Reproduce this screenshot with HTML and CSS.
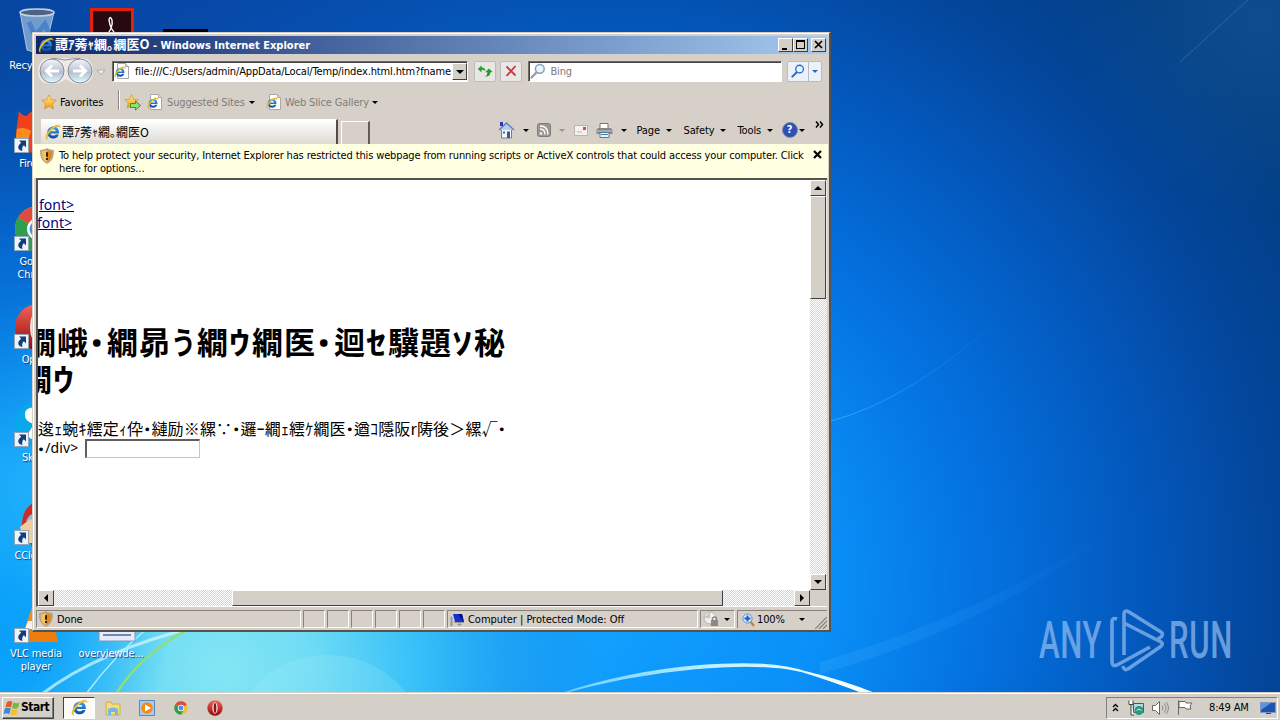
FILE: index.html
```
<!DOCTYPE html>
<html lang="en">

<head>
    <meta charset="UTF-8">
    <meta name="viewport" content="width=device-width, initial-scale=1.0">
    <title>Desktop</title>
    <link rel="stylesheet" href="styles.css">
</head>

<body>

    <!-- shared icons -->
    <svg class="defs" width="0" height="0">
        <defs>
            <linearGradient id="gBlue" x1="0" y1="0" x2="0" y2="1">
                <stop offset="0" stop-color="#3aa4ee" />
                <stop offset="1" stop-color="#0b4aa0" />
            </linearGradient>
            <linearGradient id="gRound" x1="0" y1="0" x2="0" y2="1">
                <stop offset="0" stop-color="#f4f6fa" />
                <stop offset=".45" stop-color="#c3cad6" />
                <stop offset=".55" stop-color="#b4c0cf" />
                <stop offset="1" stop-color="#e0faff" />
            </linearGradient>
            <linearGradient id="gStar" x1="0" y1="0" x2="0" y2="1">
                <stop offset="0" stop-color="#fff08a" />
                <stop offset="1" stop-color="#f49a10" />
            </linearGradient>
            <linearGradient id="gRed" x1="0" y1="0" x2="0" y2="1">
                <stop offset="0" stop-color="#f0645a" />
                <stop offset="1" stop-color="#960a0a" />
            </linearGradient>
        </defs>
        <symbol id="ie" viewBox="0 0 16 16">
            <path d="M14 9.400H5.400c.2 1.500 1.300 2.200 2.900 2.200 1.200 0 2-.4 2.400-1.200h3c-.7 2.500-2.600 4-5.400 4-3.600 0-6-2.500-6-6S4.700 2.500 8.300 2.500s6 2.600 5.700 6.900zM10.800 7.200C10.600 6 9.600 5.300 8.200 5.300S5.700 6 5.400 7.200z" fill="url(#gBlue)" />
            <path d="M2.600 15.300C-.8 14.800 1.200 8.400 6.400 4 10.800.4 15.400 0 15 3.500 14 1.700 10.700 2.700 7.300 5.600 3.200 9.200 1.300 13.600 2.600 15.300z" fill="#f5c62c" stroke="#c98e0c" stroke-width=".3" />
        </symbol>
        <symbol id="iepage" viewBox="0 0 16 16">
            <path d="M3.500 .5h8l3 3v12h-11z" fill="#fff" stroke="#a8a8a8" />
            <path d="M11.500 .5v3h3" fill="#ddd" stroke="#aaa" />
            <use href="#ie" x="0" y="3" width="12" height="12" />
        </symbol>
        <symbol id="star" viewBox="0 0 16 16">
            <path d="M8 .8l2.200 4.800 5 .6-3.700 3.500 1 5.200L8 12.300l-4.500 2.600 1-5.200L.8 6.200l5-.6z" fill="url(#gStar)" stroke="#d08c28" stroke-width=".7" />
        </symbol>
        <symbol id="shield" viewBox="0 0 16 16">
            <path d="M8 .6C6 1.800 4 2.200 1.600 2.300c-.3 6.200 1.200 10.700 6.400 13.100 5.200-2.400 6.700-6.900 6.400-13.100C12 2.200 10 1.800 8 .6z" fill="#c9a878" stroke="#9d9d9d" stroke-width=".8" />
            <path d="M8 2C6.300 3 4.600 3.300 2.900 3.400 2.800 8.600 4 12 8 14.100z" fill="#f8c458" />
            <path d="M8 2c1.700 1 3.400 1.300 5.100 1.400.1 5.200-1.100 8.600-5.100 10.700z" fill="#d88a28" />
            <path d="M8 4.300v4.400M8 10v2" stroke="#3a2408" stroke-width="2" />
        </symbol>
        <symbol id="glass" viewBox="0 0 16 16">
            <path d="M6.600 9.400L1.500 14.500" stroke="currentColor" stroke-width="2.200" stroke-linecap="round" />
            <circle cx="9.800" cy="5.800" r="4.400" fill="#e8f6ff" stroke="currentColor" stroke-width="1.500" />
        </symbol>
        <symbol id="shortcut" viewBox="0 0 15 15">
            <path d="M.5 .5h14v14H.5z" fill="#eef4fa" stroke="#8fa6bb" />
            <path d="M5 2.500h7v7L9.900 7.300C8.400 8.600 7.800 10.400 8.400 13 3.400 12 2.800 7.600 7.200 4.700z" fill="#123e80" />
        </symbol>
        <symbol id="chrome" viewBox="0 0 48 48">
            <circle cx="24" cy="24" r="23" fill="#eac234" />
            <path d="M24 24L4 12.600A23 23 0 0 1 44 13z" fill="#dd4b3e" />
            <path d="M24 24L4 12.600A23 23 0 0 0 24 47l10-17z" fill="#2f9e50" />
            <circle cx="24" cy="24" r="11" fill="#fff" />
            <circle cx="24" cy="24" r="8.500" fill="#4c8bf0" />
        </symbol>
        <symbol id="opera" viewBox="0 0 48 48">
            <circle cx="24" cy="24" r="23" fill="url(#gRed)" />
            <ellipse cx="24" cy="24" rx="8" ry="17" fill="#f6e4e0" />
            <ellipse cx="24" cy="24" rx="4" ry="15" fill="#8c1412" />
        </symbol>
    </svg>

    <div class="desktop">

        <!-- wallpaper -->
        <svg class="wallpaper" viewBox="0 0 1280 720">
            <defs>
                <radialGradient id="sky" gradientUnits="userSpaceOnUse" cx="600" cy="580" r="800">
                    <stop offset="0" stop-color="#12a2ff" />
                    <stop offset=".28" stop-color="#0a90f8" />
                    <stop offset=".48" stop-color="#0472e0" />
                    <stop offset=".68" stop-color="#0358bc" />
                    <stop offset=".85" stop-color="#034599" />
                    <stop offset="1" stop-color="#023f84" />
                </radialGradient>
                <radialGradient id="leftglow" gradientUnits="userSpaceOnUse" cx="0" cy="640" r="600">
                    <stop offset="0" stop-color="#0aa4fc" />
                    <stop offset=".3" stop-color="#0a9cf6" />
                    <stop offset=".65" stop-color="#0674e0" stop-opacity=".75" />
                    <stop offset="1" stop-color="#0658c0" stop-opacity="0" />
                </radialGradient>
                <radialGradient id="topleft" gradientUnits="userSpaceOnUse" cx="100" cy="-60" r="500">
                    <stop offset="0" stop-color="#0a48b0" stop-opacity=".8" />
                    <stop offset="1" stop-color="#0a58c0" stop-opacity="0" />
                </radialGradient>
                <radialGradient id="cyan" gradientUnits="userSpaceOnUse" cx="225" cy="670" r="430">
                    <stop offset="0" stop-color="#84e6f4" />
                    <stop offset=".2" stop-color="#70dcf4" />
                    <stop offset=".45" stop-color="#3cc8fa" stop-opacity=".9" />
                    <stop offset="1" stop-color="#12a2ff" stop-opacity="0" />
                </radialGradient>
                <radialGradient id="left" gradientUnits="userSpaceOnUse" cx="0" cy="640" r="170">
                    <stop offset="0" stop-color="#0aa0fa" />
                    <stop offset=".3" stop-color="#0aa0fa" stop-opacity=".9" />
                    <stop offset="1" stop-color="#0aa0fa" stop-opacity="0" />
                </radialGradient>
                <linearGradient id="arc" gradientUnits="userSpaceOnUse" x1="560" y1="0" x2="880" y2="0">
                    <stop offset="0" stop-color="#9ae6ff" stop-opacity=".5" />
                    <stop offset=".5" stop-color="#c6f2ff" />
                    <stop offset="1" stop-color="#fff" />
                </linearGradient>
                <linearGradient id="thin" gradientUnits="userSpaceOnUse" x1="831" y1="0" x2="1000" y2="0">
                    <stop offset="0" stop-color="#50bcff" stop-opacity=".6" />
                    <stop offset="1" stop-color="#50bcff" stop-opacity="0" />
                </linearGradient>
                <linearGradient id="ray" gradientUnits="userSpaceOnUse" x1="820" y1="0" x2="1110" y2="0">
                    <stop offset="0" stop-color="#4cb4ff" stop-opacity=".2" />
                    <stop offset="1" stop-color="#4cb4ff" stop-opacity="0" />
                </linearGradient>
                <radialGradient id="corner" gradientUnits="userSpaceOnUse" cx="1260" cy="20" r="190">
                    <stop offset="0" stop-color="#3c80b0" stop-opacity=".2" />
                    <stop offset="1" stop-color="#3c80b0" stop-opacity="0" />
                </radialGradient>
            </defs>
            <rect width="1280" height="720" fill="url(#sky)" />
            <rect width="1280" height="720" fill="url(#topleft)" />
            <rect width="1280" height="720" fill="url(#leftglow)" />
            <rect width="1280" height="720" fill="url(#cyan)" />
            <rect width="1280" height="720" fill="url(#left)" />
            <rect width="1280" height="720" fill="url(#corner)" />
            <path d="M831 421Q910 400 1000 318" fill="none" stroke="url(#thin)" />
            <path d="M1180 62L1248 0" stroke="#6cb0e8" stroke-opacity=".3" />
            <path d="M820 662Q980 615 1110 530V534Q980 630 820 674z" fill="url(#ray)" />
            <path d="M235 720Q262 655 330 655Q380 656 412 700z" fill="#a8f0fa" fill-opacity=".2" />
            <path d="M42 694Q100 650 200 626" fill="none" stroke="#d4fbff" stroke-width="3" stroke-opacity=".7" />
            <path d="M86 694Q115 655 150 626" fill="none" stroke="#a8eefc" stroke-width="1.500" />
            <path d="M116 694Q140 655 190 628" fill="none" stroke="#90e070" stroke-width="2.500" />
            <path d="M560 694C650 664 760 656 806 672Q840 680 876 694H866Q830 680 800 671C750 660 650 668 560 694z" fill="url(#arc)" stroke="url(#arc)" stroke-width="1.300" />
        </svg>

        <!-- desktop icons, mostly covered by the window -->
        <div class="icon recycle">
            <svg width="40" height="46" viewBox="0 0 40 46">
                <path d="M3 4l7 38q10 4 18 0L37 4z" fill="#8fb2da" fill-opacity=".8" stroke="#a9c4e2" />
                <path d="M12 14l6 14 10-12 4 10" fill="none" stroke="#3c78c4" stroke-width="5" stroke-opacity=".7" />
                <ellipse cx="20" cy="4.500" rx="17" ry="3.500" fill="#4c6484" stroke="#c4d4e4" stroke-width="1.500" />
            </svg>
            <span>Recycle Bin</span>
        </div>
        <div class="icon acrobat">
            <svg width="44" height="40" viewBox="0 0 44 40">
                <path d="M1.500 1.500h41v38h-41z" fill="#270a10" stroke="#e4200e" stroke-width="3" />
                <path d="M13 32Q24 20 22 12q-2-5-3 0 1 10 9 16" fill="none" stroke="#fff" stroke-width="1.400" />
            </svg>
        </div>
        <div class="icon console"></div>
        <div class="icon firefox">
            <svg width="48" height="42" viewBox="0 0 48 42">
                <path d="M5 0q3 5 8 5 3-5 8-5v6q24 4 24 22c0 12-10 14-22 14S1 38 2 22Q3 14 5 0z" fill="#f0401c" />
                <path d="M3 18q8-3 14 2l-3 9-12-1z" fill="#fc8c1c" />
                <use href="#shortcut" x="0" y="27" width="15" height="15" />
            </svg>
            <span>Firefox</span>
        </div>
        <div class="icon gchrome">
            <svg width="48" height="48" viewBox="0 0 48 48">
                <use href="#chrome" width="48" height="48" />
                <use href="#shortcut" x="0" y="31" width="15" height="15" />
            </svg>
            <span>Google<br>Chrome</span>
        </div>
        <div class="icon gopera">
            <svg width="48" height="48" viewBox="0 0 48 48">
                <use href="#opera" width="48" height="48" />
                <use href="#shortcut" x="0" y="31" width="15" height="15" />
            </svg>
            <span>Opera</span>
        </div>
        <div class="icon skype">
            <svg width="48" height="48" viewBox="0 0 48 48">
                <circle cx="24" cy="24" r="23" fill="#08a8ec" />
                <path d="M30 8q-20-5-19 6 0 8 14 10v14q-8 2-12-4" fill="#fff" />
                <use href="#shortcut" x="0" y="31" width="15" height="15" />
            </svg>
            <span>Skype</span>
        </div>
        <div class="icon ccleaner">
            <svg width="48" height="48" viewBox="0 0 48 48">
                <path d="M8 26Q8 4 30 0v48H18z" fill="#cc2c24" />
                <path d="M12 22q6-12 14-4v10z" fill="#7cc0ec" />
                <path d="M6 28l10-8 12 6v18H10z" fill="#f2cc9c" />
                <use href="#shortcut" x="0" y="31" width="15" height="15" />
            </svg>
            <span>CCleaner</span>
        </div>
        <div class="icon vlc">
            <svg width="48" height="48" viewBox="0 0 48 48">
                <path d="M20 4h8l10 30H10z" fill="#f08a18" />
                <path d="M14 24h20l3 8H11z" fill="#f4f4f4" />
                <path d="M7 32h34l3 13H3z" fill="#ee7d10" />
                <use href="#shortcut" x="0" y="31" width="15" height="15" />
            </svg>
            <span>VLC media<br>player</span>
        </div>
        <div class="icon overview">
            <svg width="38" height="48" viewBox="0 0 38 48">
                <path d="M1 0h36v44H1z" fill="#e6ecfa" stroke="#8096c0" />
                <path d="M5 38h28" stroke="#4868a8" stroke-width="1.500" />
            </svg>
            <span>overviewde...</span>
        </div>

        <!-- browser window -->
        <div class="window">
            <div class="titlebar">
                <svg width="16" height="16"><use href="#ie" /></svg>
                <b class="title"><span class="jp">譚ｱ莠ｬ繝｡繝医Ο</span> - Windows Internet Explorer</b>
                <div class="capbtn"><svg width="15" height="14"><path d="M4 10h5v2H4z" /></svg></div>
                <div class="capbtn"><svg width="15" height="14"><path d="M3 2h9v9H3zM4 4v6h7V4z" fill-rule="evenodd" /></svg></div>
                <div class="capbtn close"><svg width="15" height="14"><path d="M4 3l7 7M11 3l-7 7" stroke="#000" stroke-width="1.700" /></svg></div>
            </div>

            <!-- address row -->
            <div class="navbar">
                <svg class="backfwd" width="56" height="28" viewBox="0 0 56 28">
                    <path d="M13 1h29q13 0 13 13T42 27q-8 0-14-5-6 5-15 5Q0 27 0 14T13 1z" fill="#ece9e6" />
                    <path d="M13 1.500q8 0 14 1.500 8-1.500 15-1.500" fill="none" stroke="#8a8e96" />
                    <circle cx="14" cy="14" r="12" fill="url(#gRound)" stroke="#858c98" />
                    <circle cx="42" cy="14" r="12" fill="url(#gRound)" stroke="#858c98" />
                    <path d="M21 14H9M14 8.500L8.500 14l5.500 5.500M35 14h12M42 8.500l5.500 5.500-5.500 5.500" fill="none" stroke="#fff" stroke-width="3" />
                </svg>
                <svg class="histdrop" width="10" height="7"><path d="M1 1h8L5 6z" fill="#eee" stroke="#b0aca4" /></svg>
                <div class="address">
                    <svg width="16" height="16"><use href="#iepage" /></svg>
                    <span class="url">file:///C:/Users/admin/AppData/Local/Temp/index.html.htm?fname</span>
                    <div class="combo"><i class="down"></i></div>
                </div>
                <div class="tool refresh">
                    <svg width="16" height="16" viewBox="0 0 16 16">
                        <path d="M.8 6L4.500 2.300V4.500Q8 4 8.500 8 7 6.500 4.500 7v2.600z" fill="#2ba02b" />
                        <path d="M15.500 9L12 5.500 8.300 9.200h2.200q0 3-2.500 4.300 5 .5 5.500-4.300z" fill="#1f9a24" />
                    </svg>
                </div>
                <div class="tool stop">
                    <svg width="14" height="14"><path d="M2.500 2.500l9 9M11.500 2l-9 10" stroke="#cc3440" stroke-width="1.800" /></svg>
                </div>
                <div class="search">
                    <svg width="16" height="16" color="#8aa0b4"><use href="#glass" /></svg>
                    <span>Bing</span>
                </div>
                <div class="tool go">
                    <svg width="14" height="14" color="#2468d8"><use href="#glass" /></svg>
                    <i class="down blue"></i>
                </div>
            </div>

            <!-- favorites row -->
            <div class="favbar">
                <svg width="16" height="16"><use href="#star" /></svg>
                <span class="fav">Favorites</span>
                <span class="vsep"></span>
                <svg width="18" height="17" viewBox="0 0 18 17">
                    <use href="#star" width="15" height="15" />
                    <path d="M6.500 9.500h5V7l5 4.500-5 4.500v-2.500h-5z" fill="#8ee070" stroke="#2a9a20" />
                </svg>
                <svg class="pg" width="16" height="16"><use href="#iepage" /></svg>
                <span class="sites">Suggested Sites</span><i class="down"></i>
                <svg class="pg2" width="16" height="16"><use href="#iepage" /></svg>
                <span class="slices">Web Slice Gallery</span><i class="down"></i>
            </div>

            <!-- tabs and command bar -->
            <div class="tabrow">
                <div class="tab">
                    <svg width="16" height="16"><use href="#ie" /></svg>
                    <span class="jp">譚ｱ莠ｬ繝｡繝医Ο</span>
                </div>
                <div class="newtab"></div>
                <div class="commands">
                    <svg width="17" height="18" viewBox="0 0 17 18">
                        <path d="M3.500 8v9h10V8z" fill="#f4f6fb" stroke="#6c7ca8" />
                        <path d="M1 9l7.500-7 7.500 7" fill="#b4cef0" stroke="#5c7cb8" stroke-width="1.300" />
                        <path d="M2 1h3v4H2z" fill="#2838b8" />
                        <path d="M9 10.500h3V17H9z" fill="#3c5898" />
                        <path d="M5 10.500h2v2H5z" fill="#3c68c0" />
                    </svg>
                    <i class="down"></i>
                    <svg class="rss" width="14" height="14" viewBox="0 0 14 14">
                        <rect x=".5" y=".5" width="13" height="13" rx="2" fill="#9a9794" stroke="#7e7b78" />
                        <path d="M3 6q5 0 5 5.500M3 3q8 0 8 8.500" fill="none" stroke="#fff" stroke-width="1.400" />
                        <circle cx="4" cy="10.500" r="1.200" fill="#fff" />
                    </svg>
                    <i class="down grey"></i>
                    <svg class="mail" width="14" height="11"><path d="M.5 .5h13v10H.5z" fill="#f4f2f0" stroke="#b8b4ae" /><path d="M9 2h3v3H9z" fill="#d84850" /><path d="M3 7h5" stroke="#bbb" /></svg>
                    <svg class="printer" width="17" height="15" viewBox="0 0 17 15">
                        <path d="M4 .5h8v5H4z" fill="#fff" stroke="#777" />
                        <path d="M2 5h13l1.500 2v4h-16V7z" fill="#84868c" />
                        <path d="M1 8h15" stroke="#c8cad0" />
                        <path d="M4 9.500h9v5H4z" fill="#e8f4fc" stroke="#65788c" />
                        <path d="M5 11.500h7" stroke="#2888b8" />
                    </svg>
                    <i class="down"></i>
                    <span class="cpage">Page</span><i class="down"></i>
                    <span class="csafe">Safety</span><i class="down"></i>
                    <span class="ctool">Tools</span><i class="down"></i>
                    <div class="help">?</div><i class="down"></i>
                    <svg class="more" width="9" height="7"><path d="M1 .5l2.500 3L1 6.500M5 .5l2.500 3L5 6.500" fill="none" stroke="#000" stroke-width="1.500" /></svg>
                </div>
            </div>

            <!-- security information bar -->
            <div class="infobar">
                <svg width="16" height="16"><use href="#shield" /></svg>
                <p>To help protect your security, Internet Explorer has restricted this webpage from running scripts or ActiveX controls that could access your computer. Click<br>here for options...</p>
                <svg class="x" width="9" height="9"><path d="M1 1l7 7M8 1L1 8" stroke="#000" stroke-width="2.200" /></svg>
            </div>

            <div class="view">
                <div class="page">
                    <a class="lnk first">font&gt;</a>
                    <a class="lnk">font&gt;</a>
                    <h1>繝峨<i class="d">･</i>繝昴<i class="u">う</i>繝<i class="w">ｳ</i>繝医<i class="d">･</i>迴<i class="s">ｾ</i>驥題<i class="s">ｿ</i>秘</h1>
                    <h1 class="wrapped">繝<i class="w">ｳ</i></h1>
                    <p class="body">逡ｪ蜿ｷ繧定ｨ伜<i>･</i>縺励※縲∵<i>･</i>邏ｰ繝ｪ繧ｹ繝医<i>･</i>遒ｺ隱阪r陦後＞縲√<i>･</i></p>
                    <p class="body second"><i>･</i><span>/div&gt;</span><input type="text"></p>
                </div>
                <div class="vscroll">
                    <div class="sbtn"><i class="up"></i></div>
                    <div class="vthumb"></div>
                    <div class="sbtn end"><i class="down"></i></div>
                </div>
                <div class="hscroll">
                    <div class="sbtn"><i class="lt"></i></div>
                    <div class="hthumb"></div>
                    <div class="sbtn end"><i class="rt"></i></div>
                </div>
                <div class="corner"></div>
            </div>

            <div class="statusbar">
                <div class="cell done"><svg width="16" height="16"><use href="#shield" /></svg><span>Done</span></div>
                <div class="cell"></div>
                <div class="cell"></div>
                <div class="cell"></div>
                <div class="cell"></div>
                <div class="cell"></div>
                <div class="cell last"></div>
                <div class="cell zone">
                    <svg width="16" height="15" viewBox="0 0 16 15">
                        <path d="M3 2h9l2 8H5z" fill="#1830d0" />
                        <path d="M8 2h4l2 8z" fill="#000c80" />
                        <path d="M1 5h1v9H1zM4 10.500h10M8 12h3v1H8z" fill="#888" stroke="#999" />
                    </svg>
                    <span>Computer | Protected Mode: Off</span>
                </div>
                <div class="cell lock">
                    <svg width="16" height="16" viewBox="0 0 16 16">
                        <circle cx="7" cy="7" r="6" fill="#efefef" stroke="#b4b2ae" />
                        <path d="M7 1v6H1" fill="#c4c2be" />
                        <path d="M8 9h7v6H8z" fill="#8a8886" />
                        <path d="M9.500 9V7q2-2 4 0v2" fill="none" stroke="#8a8886" stroke-width="1.400" />
                    </svg>
                    <i class="down"></i>
                </div>
                <div class="cell zoom">
                    <svg width="13" height="14" viewBox="0 0 13 14">
                        <path d="M8 8l4 5" stroke="#c08040" stroke-width="2.200" />
                        <circle cx="5.500" cy="5.500" r="4.600" fill="#d8ecff" stroke="#5c90d0" />
                        <path d="M5.500 2.500v6M2.500 5.500h6" stroke="#1c5cc0" stroke-width="2" />
                    </svg>
                    <span>100%</span>
                    <i class="down"></i>
                    <svg class="grip" width="12" height="12"><path d="M0 12L12 0M4 12l8-8M8 12l4-4" stroke="#807c76" stroke-width="1.200" /></svg>
                </div>
            </div>
        </div>

        <!-- watermark -->
        <div class="watermark">
            <span>ANY</span>
            <svg width="56" height="64" viewBox="0 0 56 64">
                <path d="M8 10Q3 8 3 13V53q0 5 5 3L41 38M15 46V6q0-6 5-3L52 23q3 2 0 5l-3 2M15 14L52 33q3 2-1 5L19 60q-4 2-5-3" fill="none" stroke="#8ab8ee" stroke-width="3.600" stroke-linejoin="round" />
            </svg>
            <span>RUN</span>
        </div>

        <!-- taskbar -->
        <div class="taskbar">
            <div class="start">
                <svg width="18" height="16" viewBox="0 0 18 16">
                    <path d="M4 2q3-2 5.500 0L8 7.500Q5 6 2.300 7.500z" fill="#ea5a1e" />
                    <path d="M10.500 2.400q3 1.500 6 0L15 8q-3 1.500-6 0z" fill="#74b83c" />
                    <path d="M2 8.500q3-1.500 5.800 0L6.300 14q-3-1.500-5.800 0z" fill="#3c84dc" />
                    <path d="M8.800 9q3 1.500 6 0l-1.500 5.500q-3 1.500-6 0z" fill="#f6c022" />
                </svg>
                <b>Start</b>
            </div>
            <div class="task active"><svg width="17" height="17"><use href="#ie" /></svg></div>
            <div class="task">
                <svg width="16" height="16" viewBox="0 0 16 16">
                    <path d="M1 2h5l1 2h8v11H1z" fill="#f4dc80" stroke="#d0ac48" />
                    <path d="M3 15V9q5-3 10 0v6h-3v-3H6v3z" fill="#72b8e4" />
                </svg>
            </div>
            <div class="task">
                <svg width="16" height="16" viewBox="0 0 16 16">
                    <path d="M.5 .5h15v15H.5z" fill="#a8ccf0" stroke="#5288c4" />
                    <circle cx="8" cy="8" r="5.800" fill="#f48a14" />
                    <path d="M6 4.500v7L12 8z" fill="#fff" />
                </svg>
            </div>
            <div class="task"><svg width="14" height="14"><use href="#chrome" /></svg></div>
            <div class="task"><svg width="16" height="16"><use href="#opera" /></svg></div>
            <div class="tray">
                <svg class="chev" width="7" height="9"><path d="M1 4l2.500-2.500L6 4M1 8l2.500-2.500L6 8" fill="none" stroke="#000" stroke-width="1.300" /></svg>
                <svg class="net" width="17" height="16" viewBox="0 0 17 16">
                    <path d="M5.500 3.500h10v9h-10z" fill="#b8d8e8" stroke="#505860" />
                    <path d="M1 .5v4h4v-4M3 4.500V15h3" fill="#fff" stroke="#444" />
                    <circle cx="11" cy="10.500" r="4.500" fill="#2a9a7c" />
                    <path d="M8.500 10.500q2.500-3 5 0" fill="none" stroke="#d4f4ec" />
                </svg>
                <svg class="vol" width="17" height="14" viewBox="0 0 17 14">
                    <path d="M.5 4.500h3l4-4v13l-4-4h-3z" fill="#fff" stroke="#666" />
                    <path d="M10 4.500q2 2.500 0 5M12 2.500q4 4.500 0 9M14 1q5 6 0 12" fill="none" stroke="#888" />
                </svg>
                <svg class="flag" width="16" height="15" viewBox="0 0 16 15"><path d="M1.500 15V.5M2 1.500h6l1 1.500h6l-2 3 1 3H9l-1-1.500H2z" fill="#fff" stroke="#666" /></svg>
                <span>8:49 AM</span>
                <svg class="show" width="16" height="14" viewBox="0 0 16 14"><path d="M.5 1.500h15v10h-15z" fill="#1c54b0" stroke="#7c98c4" /><path d="M1 2h10L1 9z" fill="#5c94e0" /><path d="M6 12.500h5" stroke="#445" /></svg>
            </div>
        </div>
    </div>

</body>

</html>
```
FILE: styles.css
```
body {
    margin: 0;
    overflow: hidden;
    font-family: "DejaVu Sans Condensed", "DejaVu Sans", "Noto Sans CJK JP", sans-serif;
    font-size: 11px;
    letter-spacing: -0.14px;
    line-height: 13px;
    color: #000;
}

svg {
    display: block;
    flex: none;
}

i {
    font-style: normal;
}

.defs {
    position: absolute;
}

.desktop {
    position: relative;
    display: flex;
    flex-direction: column;
    justify-content: flex-end;
    width: 1280px;
    height: 720px;
    overflow: hidden;
}

.wallpaper {
    position: absolute;
    left: 0;
    top: 0;
    width: 1280px;
    height: 720px;
}

/* desktop icons */
.icon {
    position: absolute;
    left: -1px;
    width: 78px;
    display: flex;
    flex-direction: column;
    align-items: center;
    gap: 2px;
    color: #fff;
    text-align: center;
    text-shadow: 1px 1px 1px #123c80;
}

.recycle { top: 8px; left: -2px; gap: 5px; }
.acrobat { top: 8px; left: 73px; }
.console { top: 29px; left: 163px; width: 45px; height: 10px; background: #000; }
.firefox { top: 111px; gap: 4px; }
.gchrome { top: 205px; }
.gopera { top: 303px; }
.skype { top: 401px; }
.ccleaner { top: 499px; }
.firefox svg, .gchrome svg, .gopera svg, .skype svg, .ccleaner svg { margin-left: -1px; }
.gchrome span, .gopera span, .skype span, .ccleaner span { margin-left: -3px; }
.firefox span { margin-left: -6px; }
.vlc { top: 597px; left: -3px; }
.vlc svg { margin-left: 3px; }
.overview { top: 597px; left: 72px; }
.overview svg { margin-left: 11px; }

/* window frame */
.window {
    position: absolute;
    left: 32px;
    top: 32px;
    box-sizing: border-box;
    width: 799px;
    height: 600px;
    padding: 2px;
    display: flex;
    flex-direction: column;
    background: #d6d0c8;
    border: 1px solid #d4d0c8;
    border-right: 2px solid #56534e;
    border-bottom: 2px solid #56534e;
    box-shadow: inset 1px 1px 0 #fff;
}

.titlebar {
    display: flex;
    align-items: center;
    height: 18px;
    margin: 1px 0 0 1px;
    padding: 0 1px 0 2px;
    background: linear-gradient(90deg, #0c276c, #a6caf0);
    color: #fff;
}

.title {
    flex: 1;
    margin-left: 1px;
    margin-top: -2px;
    white-space: nowrap;
    letter-spacing: 0;
}

.jp {
    font-family: "Noto Sans CJK JP", sans-serif;
    font-size: 12px;
    letter-spacing: 0;
}

.title .jp {
    font-size: 13px;
}

.capbtn {
    box-sizing: border-box;
    width: 15px;
    height: 14px;
    background: #d4d0c8;
    border: 1px solid;
    border-color: #fff #404040 #404040 #fff;
    overflow: hidden;
}

.capbtn svg {
    margin: -1px 0 0 -1px;
}

.close {
    margin-left: 3px;
}

/* small arrows */
.down, .up {
    flex: none;
    width: 0;
    height: 0;
    border: 3px solid transparent;
    border-top-color: #000;
    border-bottom: 0;
}

.up {
    border: 4px solid transparent;
    border-bottom-color: #000;
    border-top: 0;
}

.sbtn .down, .combo .down {
    border-width: 4px 4px 0;
}

.lt, .rt {
    border: 4px solid transparent;
    border-right-color: #000;
    border-left: 0;
}

.rt {
    border: 4px solid transparent;
    border-left-color: #000;
    border-right: 0;
}

.blue { border-top-color: #2468b8; }
.grey { border-top-color: #99958e; }

/* address row */
.navbar {
    display: flex;
    align-items: center;
    height: 34px;
    padding: 0 5px 0 3px;
}

.histdrop {
    margin: 2px 6px 0 2px;
}

.address, .search {
    display: flex;
    align-items: center;
    box-sizing: border-box;
    width: 357px;
    height: 21px;
    background: #fff;
    border: 1px solid;
    border-color: #6e6b66 #fff #fff #6e6b66;
    box-shadow: inset 1px 1px 0 #404040;
    padding-left: 1px;
}

.url {
    flex: 1;
    margin-left: 5px;
    overflow: hidden;
    white-space: nowrap;
}

.combo {
    display: flex;
    align-items: center;
    justify-content: center;
    width: 13px;
    height: 15px;
    margin: 1px 0 0;
    background: #d4d0c8;
    border: 1px solid;
    border-color: #fff #404040 #404040 #fff;
}

.tool {
    display: flex;
    align-items: center;
    justify-content: center;
    box-sizing: border-box;
    width: 22px;
    height: 21px;
    background: #e9e7e4;
    border: 1px solid #b9bcc1;
    border-radius: 2px;
}

.refresh { margin-left: 6px; }
.stop { margin-left: 4px; }

.search {
    width: 254px;
    margin-left: 6px;
    color: #7a7a7a;
}

.search span {
    margin-left: 4px;
}

.go {
    width: 35px;
    margin-left: 5px;
    gap: 7px;
    background: linear-gradient(90deg, #eaf1f9 20px, #b9bcc1 20px, #b9bcc1 21px, #eaf1f9 21px);
}

/* favorites row */
.favbar {
    display: flex;
    align-items: center;
    height: 28px;
    padding-left: 6px;
    color: #817d77;
}

.fav { width: 56px; margin-left: 3px; color: #000; }
.vsep { width: 1px; height: 20px; margin: -4px 4px 0 2px; border-left: 1px solid #8c8882; background: #fff; }
.pg { margin-left: 5px; }
.sites { width: 79px; margin-left: 4px; margin-right: 3px; white-space: nowrap; }
.pg2 { margin-left: 11px; }
.slices { width: 83px; margin-left: 3px; margin-right: 4px; white-space: nowrap; }

/* tabs */
.tabrow {
    display: flex;
    align-items: flex-end;
    height: 28px;
    padding-left: 6px;
}

.tab {
    display: flex;
    align-items: center;
    box-sizing: border-box;
    width: 298px;
    height: 25px;
    padding-left: 4px;
    gap: 1px;
    background: linear-gradient(#fff, #dedad4);
    border-top: 1px solid #fff;
    border-right: 2px solid #504d48;
}

.tab .jp {
    margin-top: -2px;
}

.newtab {
    box-sizing: border-box;
    width: 29px;
    height: 23px;
    margin-left: 3px;
    border: 1px solid #fff;
    border-right: 2px solid #605d58;
    border-bottom: 0;
}

.commands {
    display: flex;
    align-items: center;
    width: 331px;
    height: 28px;
    margin-left: 128px;
}

.commands svg + .down { margin-left: 8px; }
.rss { margin-left: 8px; }
.commands .grey { margin-right: 9px; }
.printer { margin-left: 8px; }
.cpage { width: 26px; margin-left: 10px; margin-right: 3px; }
.csafe { width: 34px; margin-left: 12px; margin-right: 2px; }
.ctool { width: 27px; margin-left: 12px; margin-right: 2px; }

.help {
    width: 14px;
    height: 14px;
    margin-left: 9px;
    margin-right: 1px;
    border: 1px solid #7c88a8;
    border-radius: 50%;
    background: #2c50b4;
    color: #fff;
    font-weight: bold;
    line-height: 14px;
    text-align: center;
}

.more {
    margin-left: 10px;
    margin-top: -12px;
}

.infobar {
    display: flex;
    align-items: flex-start;
    height: 30px;
    padding: 4px 6px 0 5px;
    background: #ffffe1;
    margin: 0 -1px;
}

.infobar p {
    flex: 1;
    margin: 1px 0 0 4px;
    white-space: nowrap;
}

.x {
    margin-top: 2px;
}

/* page area with both scrollbars */
.view {
    display: grid;
    grid-template-columns: 1fr 17px;
    grid-template-rows: 1fr 16px;
    flex: 1;
    min-height: 0;
    margin-left: 1px;
    border: 1px solid #6b6862;
    border-left: 2px solid #56534e;
    border-top: 2px solid #56534e;
    border-right: 0;
    border-bottom: 1px solid #fff;
}

.page {
    position: relative;
    overflow: hidden;
    background: #fff;
    font-family: "Noto Sans CJK JP", sans-serif;
    font-size: 16px;
    letter-spacing: 0;
    white-space: nowrap;
}

.lnk {
    display: block;
    height: 18px;
    margin-left: -1px;
    font-family: "Noto Sans", sans-serif;
    font-size: 14px;
    line-height: 18px;
    color: #00007b;
    text-decoration: underline;
}

.first {
    margin: 16px 0 0 1px;
}

.page h1 {
    margin: 90px 0 0 -13px;
    font-size: 31px;
    line-height: 37px;
    letter-spacing: 1px;
}

.page .wrapped {
    margin: 0 0 0 -17px;
}

/* half-width kana drawn a little wider */
.page h1 i {
    display: inline-block;
    letter-spacing: 0;
    transform-origin: 0 50%;
}

.page .d { width: 18px; -webkit-text-stroke: 1.5px #000; }
.page .u { width: 26px; transform: scaleX(0.8); }
.page .w { width: 23px; transform: scaleX(1.35); }
.page .s { width: 22px; transform: scaleX(1.3); }

.body {
    display: flex;
    align-items: center;
    height: 20px;
    margin: 22px 0 0 0;
    line-height: 20px;
    letter-spacing: 0.16px;
}

.body i {
    -webkit-text-stroke: 1px #000;
}

.second {
    margin-top: 0;
    margin-left: -1px;
}

.second span {
    font-family: "Noto Sans", sans-serif;
    font-size: 14px;
}

.body input {
    box-sizing: border-box;
    width: 115px;
    height: 19px;
    margin: 1px 0 0 6px;
    border: 1px solid #c8c5be;
    border-top: 2px solid #605e5a;
    border-left: 2px solid #605e5a;
}

.vscroll, .hscroll {
    display: flex;
    flex-direction: column;
    background: repeating-conic-gradient(#d9d5ce 0 25%, #fff 0 50%) 0 0 / 2px 2px;
}

.hscroll {
    flex-direction: row;
}

.sbtn, .vthumb, .hthumb {
    display: flex;
    align-items: center;
    justify-content: center;
    box-sizing: border-box;
    width: 16px;
    height: 16px;
    background: #d4d0c8;
    border: 1px solid;
    border-color: #fff #404040 #404040 #fff;
}

.vthumb {
    height: 103px;
}

.hthumb {
    width: 491px;
    margin-left: 178px;
}

.vscroll .end { margin-top: auto; }
.hscroll .end { margin-left: auto; }

.corner {
    background: #d4d0c8;
}

/* status bar */
.statusbar {
    display: flex;
    gap: 2px;
    height: 18px;
    margin: 3px 0 0 1px;
}

.cell {
    display: flex;
    align-items: center;
    box-sizing: border-box;
    width: 22px;
    height: 18px;
    border: 1px solid;
    border-color: #85817b #fff #fff #85817b;
    white-space: nowrap;
}

.done { width: 265px; padding-left: 1px; gap: 3px; }
.zone { width: 251px; padding-left: 2px; gap: 2px; letter-spacing: -0.04px; }
.lock { width: 35px; padding-left: 2px; gap: 5px; }
.zoom { flex: 1; padding-left: 4px; gap: 2px; border-right: 0; border-bottom: 0; }
.zoom span { width: 40px; }
.grip { margin: 6px 0 0 auto; }

/* watermark */
.watermark {
    position: absolute;
    left: 1039px;
    top: 609px;
    display: flex;
    align-items: center;
    justify-content: space-between;
    width: 192px;
    height: 64px;
    color: #8ab8ee;
    opacity: 0.75;
}

.watermark span {
    width: 62px;
    font-family: Roboto, sans-serif;
    font-size: 51px;
    font-weight: 500;
    line-height: 64px;
    letter-spacing: 1px;
    transform: scaleX(0.61);
    transform-origin: 0 50%;
}

.watermark svg {
    margin: 0 3px 0 7px;
}

/* taskbar */
.taskbar {
    position: relative;
    display: flex;
    align-items: center;
    box-sizing: border-box;
    height: 28px;
    padding: 2px 2px 0 2px;
    background: #d4d0c8;
    border-top: 1px solid #d4d0c8;
    box-shadow: inset 0 1px 0 #fff;
}

.start {
    display: flex;
    align-items: center;
    box-sizing: border-box;
    width: 52px;
    height: 22px;
    border: 1px solid;
    border-color: #fff #404040 #404040 #fff;
    box-shadow: inset -1px -1px 0 #808080;
    font-size: 12px;
    letter-spacing: -0.5px;
}

.task {
    display: flex;
    align-items: center;
    justify-content: center;
    box-sizing: border-box;
    width: 32px;
    height: 22px;
    margin-right: 2px;
}

.active {
    margin-left: 9px;
    border: 1px solid;
    border-color: #404040 #fff #fff #404040;
    background: #fcfbfa;
}

.tray {
    display: flex;
    align-items: center;
    box-sizing: border-box;
    width: 172px;
    height: 22px;
    margin-left: auto;
    padding-left: 5px;
    border: 1px solid;
    border-color: #808080 #fff #fff #808080;
    white-space: nowrap;
}

.net { margin-left: 9px; }
.vol { margin-left: 7px; }
.flag { margin-left: 8px; }
.tray span { width: 42px; margin-left: 16px; }
.show { margin-left: 9px; }
```
